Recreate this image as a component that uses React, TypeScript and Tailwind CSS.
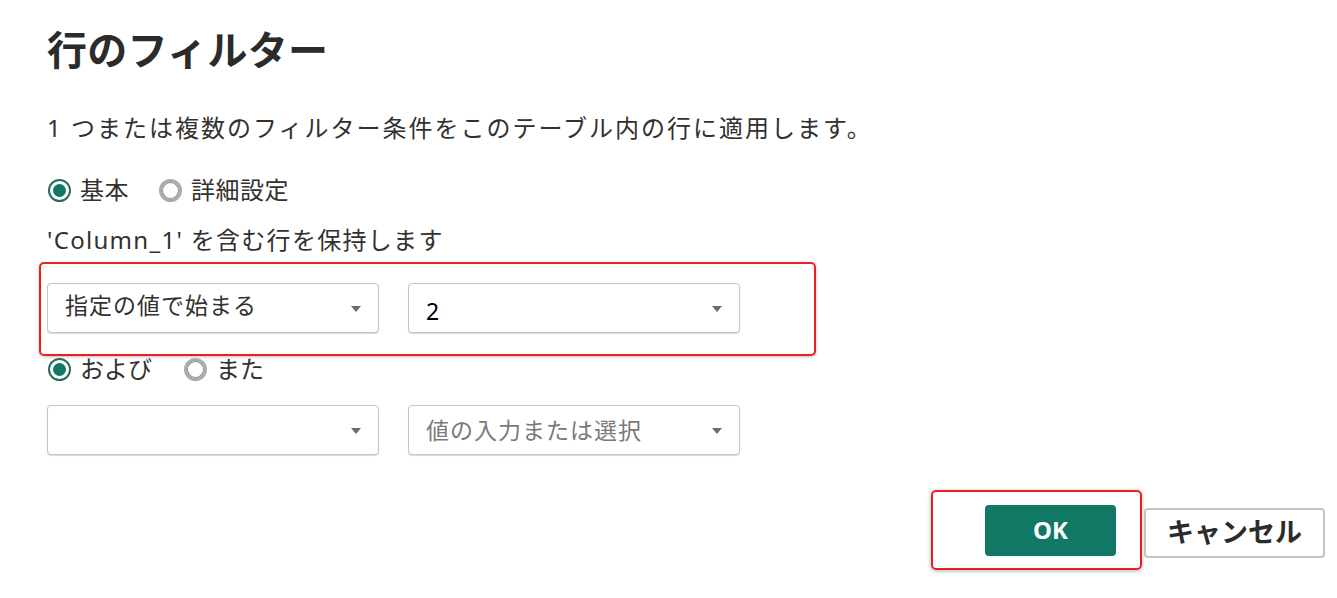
import React from "react";

const font = {
  fontFamily: '"Noto Sans", "Noto Sans CJK JP", sans-serif',
};

const Radio = ({ checked, label }: { checked: boolean; label: string }) => (
  <label className="flex items-center gap-[9px]">
    <span
      className={
        checked
          ? "ml-[1px] flex h-[23px] w-[23px] shrink-0 items-center justify-center rounded-full border-[2.5px] border-[#2c6b5b] bg-white"
          : "ml-[1px] flex h-[23px] w-[23px] shrink-0 items-center justify-center rounded-full border-[3px] border-[#ababab] bg-white shadow-[inset_0_0_0_1px_#888888]"
      }
    >
      {checked && <span className="h-[13px] w-[13px] rounded-full bg-[#117865]" />}
    </span>
    <span>{label}</span>
  </label>
);

const Select = ({
  value,
  placeholder,
  dark,
}: {
  value?: string;
  placeholder?: string;
  dark?: boolean;
}) => (
  <div className="flex h-[50px] w-[332px] items-center justify-between rounded-[4px] border border-[#c6c6c6] bg-white pl-[17px] pr-[17px] shadow-[0_1px_1px_rgba(0,0,0,0.15)]">
    <span
      className={
        placeholder
          ? "tracking-[1px] text-[#7a7a7a]"
          : dark
            ? "pt-[6px] text-black"
            : "pb-[6px] tracking-[1px] text-[#323130]"
      }
    >
      {value ?? placeholder ?? ""}
    </span>
    <svg width="10" height="6" viewBox="0 0 10 6" className="mt-[2px]">
      <path d="M0 0h10L5 6z" fill="#6b6b6b" />
    </svg>
  </div>
);

export default function App() {
  return (
    <div
      className="h-[598px] w-[1337px] overflow-hidden bg-white pl-[47px] pt-[26px] text-[23px] text-[#323130]"
      style={font}
    >
      <h1 className="text-[40px] font-bold leading-[48px] tracking-[0.3px] text-[#2b2b2b]">
        行のフィルター
      </h1>

      <p className="mt-[38px] text-[24px] leading-[32px] tracking-[2px]">
        1 つまたは複数のフィルター条件をこのテーブル内の行に適用します。
      </p>

      <div className="mt-[30px] flex h-[32px] items-center gap-[29px] text-[24px] tracking-[0.5px]">
        <Radio checked label="基本" />
        <Radio checked={false} label="詳細設定" />
      </div>

      <p className="mt-[18px] text-[24px] leading-[32px] tracking-[1.3px]">
        'Column_1' を含む行を保持します
      </p>

      <div className="-ml-[8px] mt-[6px] flex h-[94px] w-[777px] gap-[29px] rounded-[5px] border-2 border-[#ee1c25] pl-[6px] pt-[19px] shadow-[0_1px_3px_rgba(0,0,0,0.25)]">
        <Select value="指定の値で始まる" />
        <Select value="2" dark />
      </div>

      <div className="flex h-[26px] items-center gap-[31px] text-[24px]">
        <Radio checked label="および" />
        <Radio checked={false} label="また" />
      </div>

      <div className="mt-[23px] flex gap-[29px]">
        <Select />
        <Select placeholder="値の入力または選択" />
      </div>

      <div className="mt-[35px] flex items-center justify-end pr-[12px]">
        <div className="flex h-[80px] w-[211px] items-center rounded-[5px] border-2 border-[#ee1c25] pl-[52px] shadow-[0_1px_4px_rgba(0,0,0,0.3)]">
          <button className="h-[51px] w-[131px] rounded-[4px] bg-[#117865] text-[24px] font-bold text-white">
            OK
          </button>
        </div>
        <button className="ml-[2px] mt-[5px] h-[50px] w-[181px] rounded-[4px] border-2 border-[#c4c4c4] bg-white text-[27px] font-bold text-[#2b2b2b]">
          キャンセル
        </button>
      </div>
    </div>
  );
}
